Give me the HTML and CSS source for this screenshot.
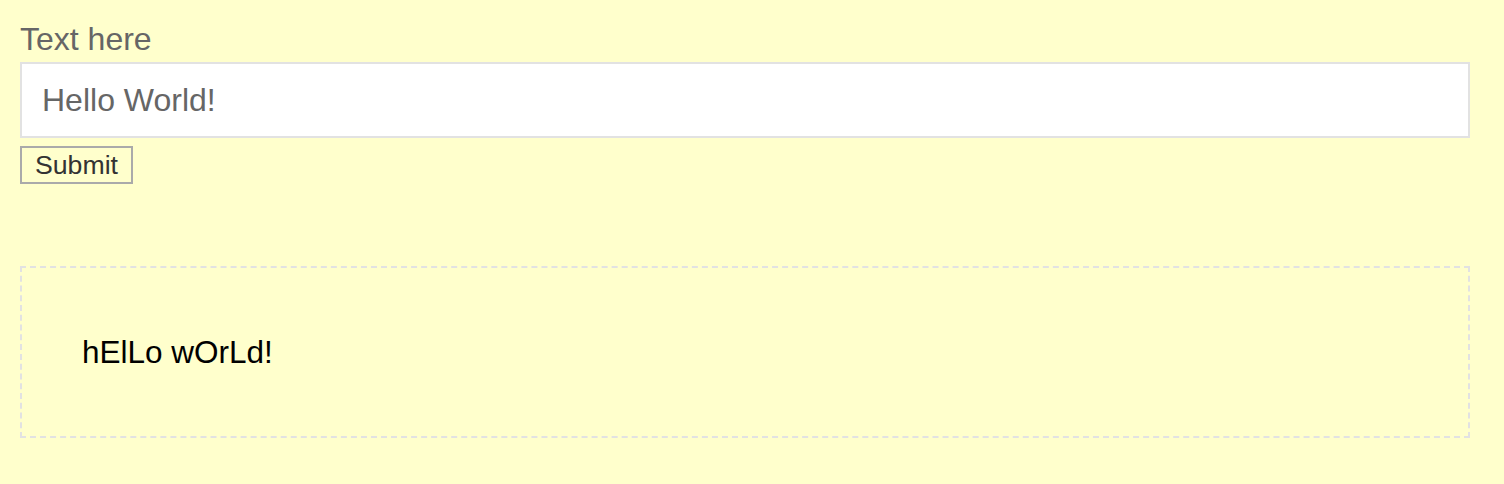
FILE: index.html
```html
<!DOCTYPE html>
<html>
<head>
<meta charset="utf-8">
<link rel="stylesheet" href="styles.css">
</head>
<body>
<div class="page">
  <form class="form">
    <label class="label" for="t">Text here</label>
    <input class="field" id="t" type="text" value="Hello World!">
    <div class="actions"><button class="btn" type="button">Submit</button></div>
  </form>
  <div class="output">
    <p class="result">hElLo wOrLd!</p>
  </div>
</div>
</body>
</html>
```

FILE: styles.css
```css
html, body {
  margin: 0;
  padding: 0;
  background: #ffffcc;
}
body {
  font-family: "Liberation Sans", Arial, sans-serif;
}
.page {
  padding: 20px;
  width: 1450px;
}
.form {
  display: flex;
  flex-direction: column;
  margin: 0;
}
.label {
  font-size: 32px;
  line-height: 38px;
  color: #666;
  margin-bottom: 4px;
}
.field {
  box-sizing: border-box;
  width: 1450px;
  height: 76px;
  border: 2px solid #e2e2e2;
  background: #fff;
  padding: 0 20px;
  font-family: "Liberation Sans", Arial, sans-serif;
  font-size: 32px;
  color: #666;
  outline: none;
  margin: 0;
}
.actions {
  margin-top: 8px;
}
.btn {
  box-sizing: border-box;
  height: 38px;
  padding: 0 13px;
  border: 2px solid #aaa;
  background: #ffffcc;
  font-family: "Liberation Sans", Arial, sans-serif;
  font-size: 26.67px;
  color: #333;
  margin: 0;
}
.output {
  margin-top: 82px;
  box-sizing: border-box;
  height: 172px;
  border: 2px dashed #e2e2e2;
  padding: 0 60px;
  display: flex;
  align-items: center;
}
.result {
  margin: 0;
  font-size: 31.5px;
  line-height: 36px;
  color: #000;
}
```
